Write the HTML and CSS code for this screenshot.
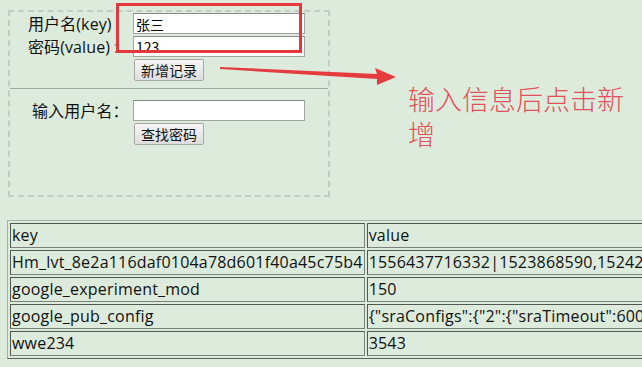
FILE: index.html
```html
<!DOCTYPE html>
<html lang="zh">
<head>
    <meta charset="UTF-8">
    <title>localStorage 示例</title>
    <link rel="stylesheet" href="styles.css">
</head>
<body>
    <!-- 存储表单 -->
    <div class="panel">
        <div class="form-row">
            <label>用户名(key)</label>
            <input type="text" value="张三">
            <label>密码(value) :</label>
            <input type="text" value="123">
            <span></span>
            <button>新增记录</button>
        </div>
        <hr>
        <div class="form-row search">
            <label>输入用户名：</label>
            <input type="text">
            <span></span>
            <button>查找密码</button>
        </div>
    </div>

    <!-- 存储列表 -->
    <table class="store">
        <tr><td>key</td><td>value</td></tr>
        <tr><td>Hm_lvt_8e2a116daf0104a78d601f40a45c75b4</td><td>1556437716332|1523868590,1524227413,1524645218</td></tr>
        <tr><td>google_experiment_mod</td><td>150</td></tr>
        <tr><td>google_pub_config</td><td>{"sraConfigs":{"2":{"sraTimeout":60000}}}</td></tr>
        <tr><td>wwe234</td><td>3543</td></tr>
    </table>

    <!-- 标注 -->
    <div class="mark-box"></div>
    <svg class="mark-arrow" width="190" height="30" viewBox="0 0 190 30">
        <polygon points="10,7 167,14 165,8 186,17 167,25 167,19 10,9" fill="#e63b3e"/>
    </svg>
    <p class="mark-note">输入信息后点击新增</p>
</body>
</html>
```

FILE: styles.css
```css
* {
    box-sizing: border-box;
}

html, body {
    overflow: hidden;
}

body {
    margin: 0;
    padding: 10px 0 0 8px;
    background: #dcebdc;
    color: #111;
    font-family: "Open Sans", "Noto Sans CJK SC", sans-serif;
    font-size: 16px;
    position: relative;
    height: 367px;
}

.panel {
    width: 322px;
    height: 187px;
    border: 2px dashed #c3ccc3;
    padding-top: 1px;
}

.form-row {
    display: grid;
    grid-template-columns: 105px 172px;
    row-gap: 2px;
    align-items: center;
    padding-left: 18px;
}

.form-row label {
    font-size: 16px;
    line-height: 20px;
    letter-spacing: 0.1px;
}

.search label {
    padding-left: 4px;
}

input {
    height: 21px;
    width: 172px;
    border: 1px solid #a3a3a3;
    border-top-color: #8a8a8a;
    background: #fff;
    padding: 0 2px;
    font-family: "Noto Sans CJK SC", sans-serif;
    font-size: 14px;
    color: #000;
    outline: none;
}

button {
    justify-self: start;
    margin-left: 1px;
    height: 22px;
    padding: 0 6px;
    font-family: "Noto Sans CJK SC", sans-serif;
    font-size: 14px;
    line-height: 20px;
    color: #111;
    background: linear-gradient(#f7f7f7, #dddddd);
    border: 1px solid #a8a8a8;
    border-radius: 2px;
}

hr {
    border: 0;
    border-top: 1px solid #a2aba2;
    height: 0;
    margin: 7px 0 11px;
}

.store {
    margin: 23px 0 0 -1px;
    border-collapse: separate;
    border-spacing: 2px;
    border: 1px solid;
    border-color: #a8aea8 #5d635d #5d635d #a8aea8;
}

.store td {
    border: 1px solid;
    border-color: #505650 #7a807a #7a807a #505650;
    padding: 1px;
    line-height: 21px;
    letter-spacing: 0.2px;
    white-space: nowrap;
}

.mark-box {
    position: absolute;
    left: 116px;
    top: 3px;
    width: 186px;
    height: 50px;
    border: 3px solid #e5373c;
}

.mark-arrow {
    position: absolute;
    left: 210px;
    top: 60px;
}

.mark-note {
    position: absolute;
    left: 408px;
    top: 81px;
    width: 230px;
    margin: 0;
    font-family: "Noto Sans CJK SC", sans-serif;
    font-size: 27px;
    font-weight: 300;
    line-height: 35px;
    color: #e2505a;
}
```
